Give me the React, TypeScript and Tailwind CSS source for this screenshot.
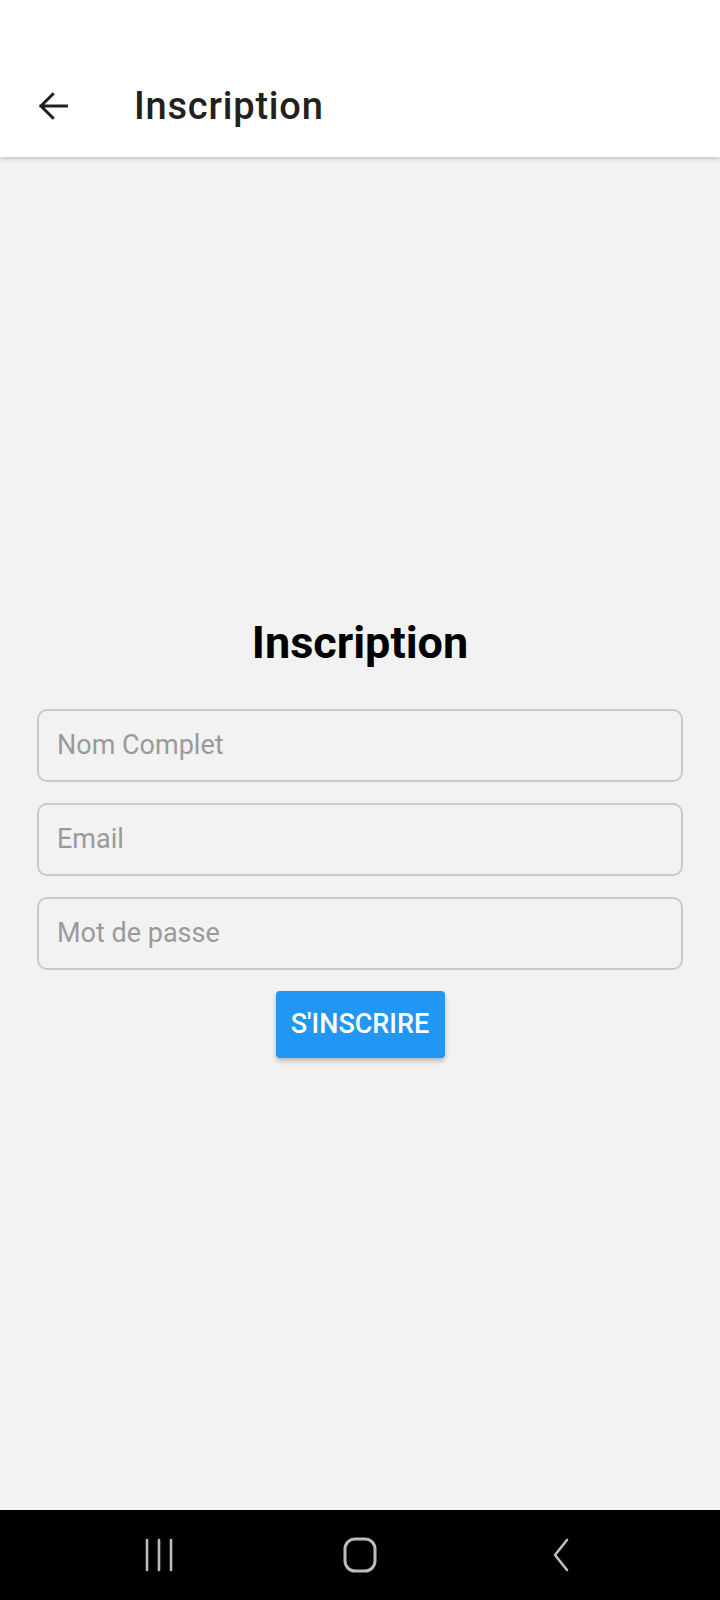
import { useState } from "react";

const App = () => {
  const [name, setName] = useState("");
  const [email, setEmail] = useState("");
  const [password, setPassword] = useState("");

  return (
    <div
      className="h-[1600px] w-[720px] flex flex-col bg-[#f2f2f2] overflow-hidden"
      style={{ fontFamily: "Roboto, 'Noto Sans', sans-serif" }}
    >
      {/* app bar */}
      <div className="h-[157px] shrink-0 bg-white shadow-[0_2px_4px_rgba(0,0,0,0.18)] relative z-10 flex items-end">
        <div className="h-[100px] w-full flex items-center pb-[2px]">
          <button className="w-[106px] h-[60px] flex items-center justify-start pl-[36px]">
            <svg width="34" height="34" viewBox="0 0 24 24" fill="none">
              <path
                d="M21.5 12H3.5M11.8 3.7L3.5 12l8.3 8.3"
                stroke="#202020"
                strokeWidth="2.1"
                strokeLinecap="square"
              />
            </svg>
          </button>
          <div className="text-[38px] font-medium text-[#212121] ml-[28px] tracking-[0.8px]">
            Inscription
          </div>
        </div>
      </div>

      {/* form */}
      <div className="flex-1 flex flex-col justify-center px-[37px] pt-[6px]">
        <h1 className="text-[45px] leading-[54px] font-bold text-black text-center">
          Inscription
        </h1>
        <div className="mt-[39px] flex flex-col gap-[21px]">
          <input
            value={name}
            onChange={(e) => setName(e.target.value)}
            placeholder="Nom Complet"
            className="h-[73px] w-full rounded-[10px] border-2 border-[#cacaca] bg-transparent px-[18px] text-[27px] text-[#222] placeholder:text-[#9a9a9a] outline-none"
          />
          <input
            value={email}
            onChange={(e) => setEmail(e.target.value)}
            placeholder="Email"
            className="h-[73px] w-full rounded-[10px] border-2 border-[#cacaca] bg-transparent px-[18px] text-[27px] text-[#222] placeholder:text-[#9a9a9a] outline-none"
          />
          <input
            type="password"
            value={password}
            onChange={(e) => setPassword(e.target.value)}
            placeholder="Mot de passe"
            className="h-[73px] w-full rounded-[10px] border-2 border-[#cacaca] bg-transparent px-[18px] text-[27px] text-[#222] placeholder:text-[#9a9a9a] outline-none"
          />
        </div>
        <div className="mt-[21px] flex justify-center">
          <button className="w-[169px] h-[67px] rounded-[4px] bg-[#2196f3] text-white text-[27px] font-medium shadow-[0_3px_5px_rgba(0,0,0,0.25)]">
            S'INSCRIRE
          </button>
        </div>
      </div>

      {/* system nav */}
      <div className="h-[90px] shrink-0 bg-black flex items-center justify-center">
        <div className="w-[201px] flex justify-center">
          <svg width="30" height="34" viewBox="0 0 30 34" fill="none">
            <path d="M3 2v30M15 2v30M27 2v30" stroke="#bdbdbd" strokeWidth="2.6" strokeLinecap="round" />
          </svg>
        </div>
        <div className="w-[201px] flex justify-center">
          <svg width="36" height="36" viewBox="0 0 36 36" fill="none">
            <rect x="3" y="2" width="30" height="32" rx="10" stroke="#bdbdbd" strokeWidth="3" />
          </svg>
        </div>
        <div className="w-[201px] flex justify-center">
          <svg width="20" height="36" viewBox="0 0 20 36" fill="none">
            <path d="M16 3L4 18l12 15" stroke="#bdbdbd" strokeWidth="2.6" strokeLinecap="round" strokeLinejoin="round" />
          </svg>
        </div>
      </div>
    </div>
  );
};

export default App;
